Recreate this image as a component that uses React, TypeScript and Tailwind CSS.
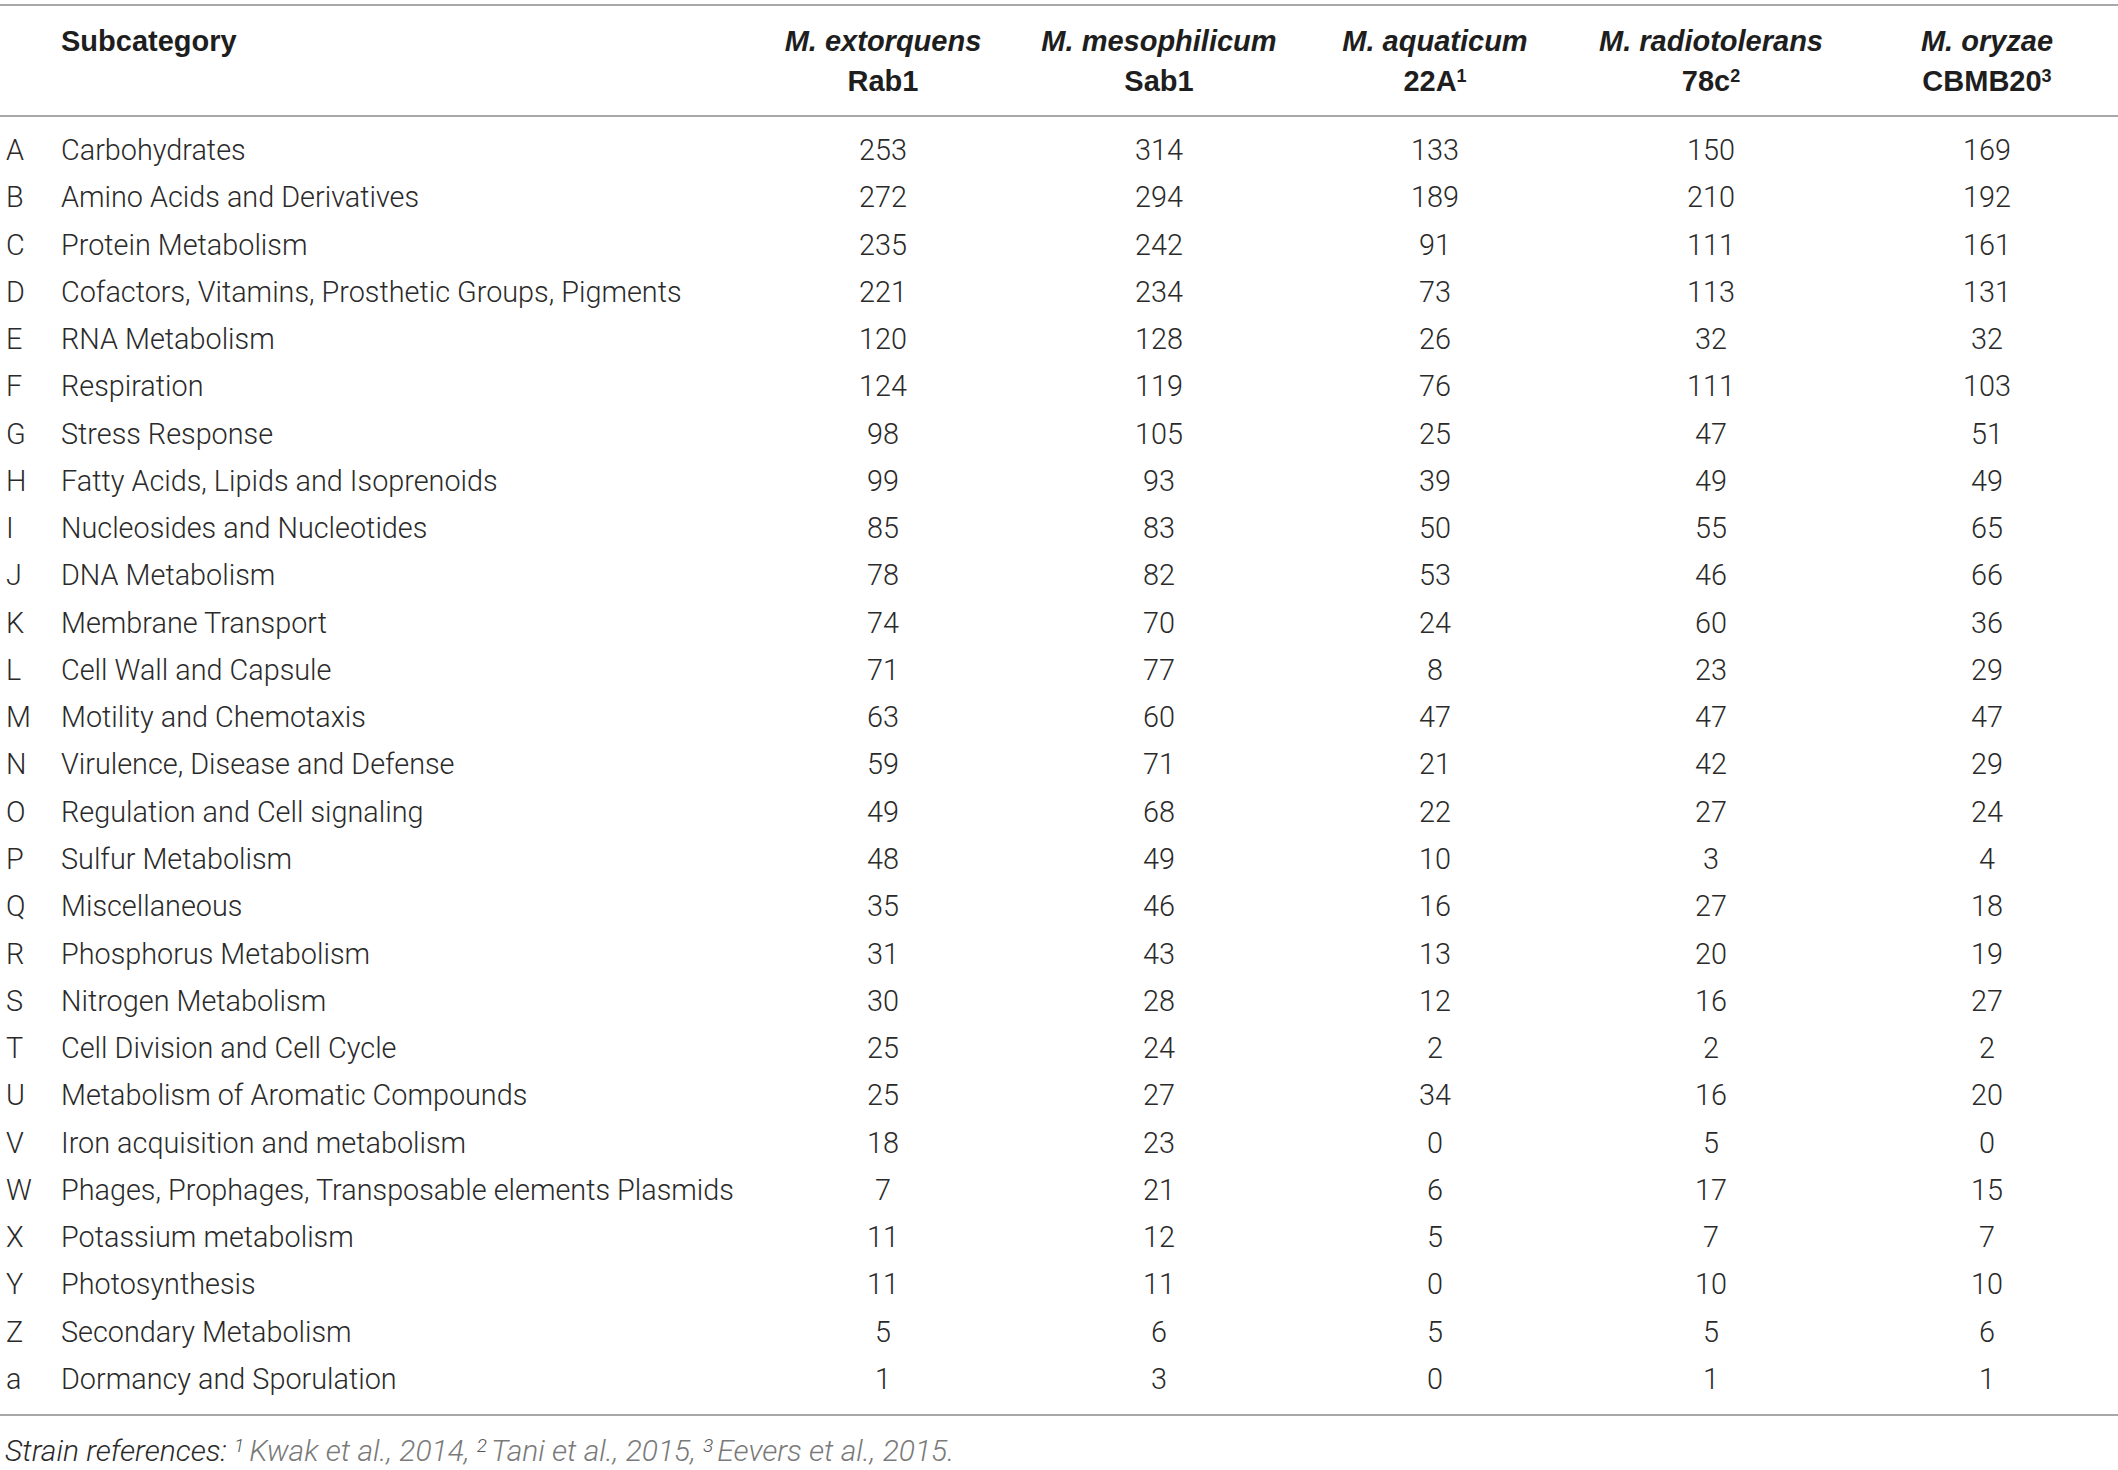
import React from "react";

const rows: [string, string, number[]][] = [
  ["A", "Carbohydrates", [253, 314, 133, 150, 169]],
  ["B", "Amino Acids and Derivatives", [272, 294, 189, 210, 192]],
  ["C", "Protein Metabolism", [235, 242, 91, 111, 161]],
  ["D", "Cofactors, Vitamins, Prosthetic Groups, Pigments", [221, 234, 73, 113, 131]],
  ["E", "RNA Metabolism", [120, 128, 26, 32, 32]],
  ["F", "Respiration", [124, 119, 76, 111, 103]],
  ["G", "Stress Response", [98, 105, 25, 47, 51]],
  ["H", "Fatty Acids, Lipids and Isoprenoids", [99, 93, 39, 49, 49]],
  ["I", "Nucleosides and Nucleotides", [85, 83, 50, 55, 65]],
  ["J", "DNA Metabolism", [78, 82, 53, 46, 66]],
  ["K", "Membrane Transport", [74, 70, 24, 60, 36]],
  ["L", "Cell Wall and Capsule", [71, 77, 8, 23, 29]],
  ["M", "Motility and Chemotaxis", [63, 60, 47, 47, 47]],
  ["N", "Virulence, Disease and Defense", [59, 71, 21, 42, 29]],
  ["O", "Regulation and Cell signaling", [49, 68, 22, 27, 24]],
  ["P", "Sulfur Metabolism", [48, 49, 10, 3, 4]],
  ["Q", "Miscellaneous", [35, 46, 16, 27, 18]],
  ["R", "Phosphorus Metabolism", [31, 43, 13, 20, 19]],
  ["S", "Nitrogen Metabolism", [30, 28, 12, 16, 27]],
  ["T", "Cell Division and Cell Cycle", [25, 24, 2, 2, 2]],
  ["U", "Metabolism of Aromatic Compounds", [25, 27, 34, 16, 20]],
  ["V", "Iron acquisition and metabolism", [18, 23, 0, 5, 0]],
  ["W", "Phages, Prophages, Transposable elements Plasmids", [7, 21, 6, 17, 15]],
  ["X", "Potassium metabolism", [11, 12, 5, 7, 7]],
  ["Y", "Photosynthesis", [11, 11, 0, 10, 10]],
  ["Z", "Secondary Metabolism", [5, 6, 5, 5, 6]],
  ["a", "Dormancy and Sporulation", [1, 3, 0, 1, 1]],
];

const headers: [string, string, string][] = [
  ["M. extorquens", "Rab1", ""],
  ["M. mesophilicum", "Sab1", ""],
  ["M. aquaticum", "22A", "1"],
  ["M. radiotolerans", "78c", "2"],
  ["M. oryzae", "CBMB20", "3"],
];

const grid = "grid grid-cols-[61px_684px_276px_276px_276px_276px_1fr]";

function Rule() {
  return <div className="h-[2px] w-full bg-[#a8a8a8]" />;
}

export default function App() {
  return (
    <div
      className="w-[2118px] h-[1470px] overflow-hidden bg-white text-[#2a2a2a]"
      style={{ fontFamily: "Roboto, 'Liberation Sans', Arial, sans-serif" }}
    >
      <div className="pt-[4px]">
        <Rule />
        <div
          className={`${grid} h-[109px] items-start pt-[15px] text-[#1e1e1e]`}
          style={{ fontFamily: "'Liberation Sans', Arial, sans-serif" }}
        >
          <div />
          <div className="font-bold text-[29px] leading-[40px]">Subcategory</div>
          {headers.map(([sp, st, sup], i) => (
            <div
              key={i}
              className={`text-center font-bold text-[29px] leading-[40px] ${i === 4 ? "pl-[7px]" : ""}`}
            >
              <div className="italic">{sp}</div>
              <div>
                {st}
                {sup && <sup className="text-[18px]">{sup}</sup>}
              </div>
            </div>
          ))}
        </div>
        <Rule />
        <div className="pt-[10px] pb-[11px]">
          {rows.map(([l, name, vals]) => (
            <div key={l} className={`${grid} h-[47.27px] items-center font-light text-[28.8px]`}>
              <div className="pl-[6px]">{l}</div>
              <div>{name}</div>
              {vals.map((v, i) => (
                <div key={i} className={`text-center ${i === 4 ? "pl-[7px]" : ""}`}>
                  {v}
                </div>
              ))}
            </div>
          ))}
        </div>
        <Rule />
        <div className="pl-[5px] pt-[17px] text-[30px] italic font-light leading-[36px]">
          <span className="text-[#2a2a2a]">Strain references: </span>
          <span className="text-[#7a7a7a]">
            <sup className="text-[19px] text-[#555] mr-[5px]">1</sup>Kwak et al., 2014,{" "}
            <sup className="text-[19px] text-[#555] mr-[4px]">2</sup>Tani et al., 2015,{" "}
            <sup className="text-[19px] text-[#555] mr-[4px]">3</sup>Eevers et al., 2015.
          </span>
        </div>
      </div>
    </div>
  );
}
